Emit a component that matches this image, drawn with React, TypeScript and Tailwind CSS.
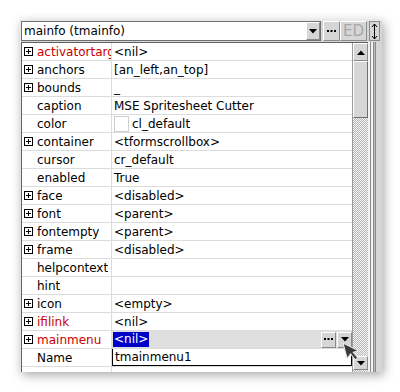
type Row = {
  name: string;
  value?: string;
  red?: boolean;
  expand?: boolean;
  swatch?: boolean;
  selected?: boolean;
  editing?: boolean;
};

const rows: Row[] = [
  { name: 'activatortarget', value: '<nil>', red: true, expand: true },
  { name: 'anchors', value: '[an_left,an_top]', expand: true },
  { name: 'bounds', value: '_', expand: true },
  { name: 'caption', value: 'MSE Spritesheet Cutter' },
  { name: 'color', value: 'cl_default', swatch: true },
  { name: 'container', value: '<tformscrollbox>', expand: true },
  { name: 'cursor', value: 'cr_default' },
  { name: 'enabled', value: 'True' },
  { name: 'face', value: '<disabled>', expand: true },
  { name: 'font', value: '<parent>', expand: true },
  { name: 'fontempty', value: '<parent>', expand: true },
  { name: 'frame', value: '<disabled>', expand: true },
  { name: 'helpcontext', value: '' },
  { name: 'hint', value: '' },
  { name: 'icon', value: '<empty>', expand: true },
  { name: 'ifilink', value: '<nil>', red: true, expand: true },
  { name: 'mainmenu', value: '<nil>', red: true, expand: true, selected: true },
  { name: 'Name', value: 'tmainmenu1', editing: true },
  { name: '', value: '' },
];

function ExpandBox() {
  return (
    <svg width="9" height="9" viewBox="0 0 9 9" className="shrink-0">
      <rect x="0.5" y="0.5" width="8" height="8" fill="white" stroke="black" />
      <path d="M2 4.5h5M4.5 2v5" stroke="black" />
    </svg>
  );
}

function Btn({ children, className }: { children?: React.ReactNode; className?: string }) {
  return (
    <div
      className={`flex items-center justify-center bg-[#d6d6d6] border border-t-white border-l-white border-r-[#8a8a8a] border-b-[#8a8a8a] ${className ?? ''}`}
    >
      {children}
    </div>
  );
}

function Dots() {
  return (
    <svg width="9" height="3" viewBox="0 0 9 3">
      <rect x="0" y="0" width="2" height="2" fill="black" />
      <rect x="3.5" y="0" width="2" height="2" fill="black" />
      <rect x="7" y="0" width="2" height="2" fill="black" />
    </svg>
  );
}

function Down() {
  return (
    <svg width="8" height="5" viewBox="0 0 8 5">
      <path d="M0 0h8L4 4.5z" fill="black" />
    </svg>
  );
}

function PropRow({ r }: { r: Row }) {
  return (
    <div className="flex h-[18px] border-b border-[#dcdcdc] shrink-0">
      <div className="w-[90px] shrink-0 flex items-center border-r border-[#dcdcdc] overflow-hidden whitespace-nowrap">
        <div className="w-[15px] shrink-0 flex items-center pl-[2px]">{r.expand && <ExpandBox />}</div>
        <span className={`overflow-hidden ${r.red ? 'text-[#c80000]' : 'text-[#000]'}`}>{r.name}</span>
      </div>
      <div
        className={`flex-1 flex items-center whitespace-nowrap overflow-hidden ${r.selected ? 'bg-[#dedede]' : ''}`}
      >
        {r.editing ? (
          <div className="flex-1 h-[18px] -mt-px border border-black bg-white flex items-center pl-[2px]">
            {r.value}
          </div>
        ) : r.selected ? (
          <>
            <span className="ml-[1px] bg-[#0000c8] text-white px-[1px] leading-[15px]">{r.value}</span>
            <div className="flex-1" />
            <Btn className="w-[15px] h-[16px] mr-[1px]">
              <Dots />
            </Btn>
            <Btn className="w-[15px] h-[16px]">
              <Down />
            </Btn>
          </>
        ) : (
          <div className="flex items-center pl-[2px] gap-[3px]">
            {r.swatch && <div className="w-[15px] h-[16px] border border-[#cfcfcf] bg-white" />}
            <span>{r.value}</span>
          </div>
        )}
      </div>
    </div>
  );
}

export default function App() {
  return (
    <div
      className="w-[400px] h-[392px] bg-white pl-[20px] pt-[20px] text-[12px] text-black"
      style={{ fontFamily: '"DejaVu Sans", sans-serif' }}
    >
      <div className="relative w-[362px] h-[352px] bg-[#d6d6d6] border-l border-t border-[#e8e8e8] shadow-[2px_3px_10px_rgba(0,0,0,0.35)] flex flex-col">
        {/* top bar */}
        <div className="flex h-[21px] shrink-0 items-start">
          <div className="w-[300px] h-[20px] border border-[#707070] bg-white flex items-stretch">
            <div className="flex-1 flex items-center pl-[2px]">mainfo (tmainfo)</div>
            <Btn className="w-[14px]">
              <Down />
            </Btn>
          </div>
          <Btn className="ml-[2px] w-[17px] h-[20px]">
            <Dots />
          </Btn>
          <Btn className="w-[27px] h-[20px] text-[#a8a8a8] text-[15px] leading-none">ED</Btn>
          <div className="ml-[2px] w-[11px] h-[20px] flex items-center justify-center border border-[#8a8a8a] bg-[#d6d6d6]">
            <svg width="7" height="17" viewBox="0 0 7 17">
              <path d="M3.5 1v15M1 4l2.5-3 2.5 3M1 13l2.5 3 2.5-3" stroke="black" fill="none" strokeWidth="1" />
            </svg>
          </div>
        </div>
        {/* body */}
        <div className="flex flex-1 min-h-0">
          <div className="w-[347px] flex border-l border-t border-[#606060] bg-white min-h-0">
            <div className="flex-1 flex flex-col overflow-hidden">
              {rows.map((r, i) => (
                <PropRow key={i} r={r} />
              ))}
            </div>
            {/* scrollbar */}
            <div className="w-[16px] flex flex-col bg-[repeating-conic-gradient(#b8b8b8_0_25%,#f4f4f4_0_50%)] bg-[length:2px_2px] border-l border-[#9a9a9a]">
              <Btn className="h-[18px] shrink-0">
                <svg width="8" height="5" viewBox="0 0 8 5">
                  <path d="M0 5h8L4 0.5z" fill="black" />
                </svg>
              </Btn>
              <div className="h-[57px] shrink-0 bg-[#d6d6d6] border border-t-white border-l-white border-r-[#6e6e6e] border-b-[#6e6e6e]" />
              <div className="flex-1" />
              <Btn className="h-[14px] shrink-0 mb-[2px]">
                <Down />
              </Btn>
            </div>
          </div>
          {/* splitter */}
          <div className="flex-1 flex">
            <div className="w-[2px] bg-[#f2f2f2]" />
            <div className="w-[1px] bg-[#8a8a8a]" />
            <div className="w-[2px] bg-[#f2f2f2]" />
            <div className="w-[1px] bg-[#8a8a8a]" />
            <div className="w-[1px] bg-[#bdbdbd]" />
            <div className="w-[1px] bg-[#8a8a8a]" />
            <div className="flex-1 bg-[#d6d6d6]" />
          </div>
        </div>
        {/* mouse cursor */}
        <svg
          className="absolute left-[321px] top-[321px]"
          width="20"
          height="24"
          viewBox="0 0 20 24"
        >
          <path
            d="M1 1 L1 17 L5.5 13.5 L8.5 20.5 L11.5 19 L8.5 12.5 L14 12.5 Z"
            fill="#3a3a3a"
            stroke="#e8e8e8"
            strokeWidth="1"
            transform="rotate(-15 1 1)"
          />
        </svg>
      </div>
    </div>
  );
}
